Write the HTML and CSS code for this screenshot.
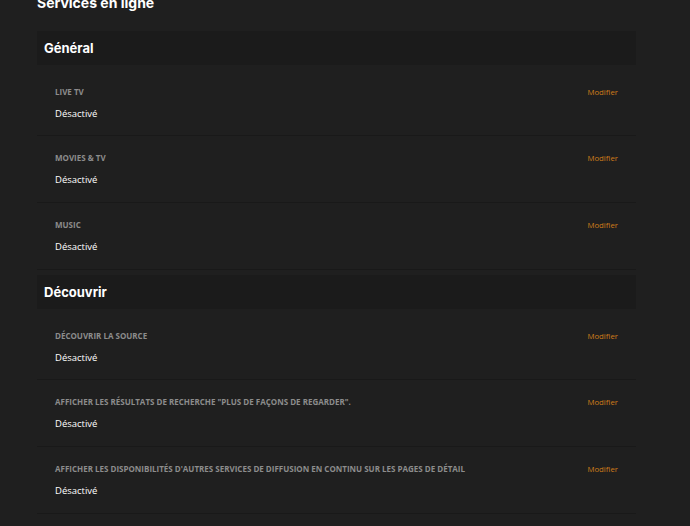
FILE: index.html
```html
<!DOCTYPE html>
<html lang="fr">
<head>
<meta charset="utf-8">
<link rel="stylesheet" href="styles.css">
</head>
<body>
<div class="page">
  <h1 class="title">Services en ligne</h1>
  <section class="group">
    <h2 class="group-head">Général</h2>
    <div class="row">
      <div class="row-main"><div class="label">Live TV</div><div class="value">Désactivé</div></div>
      <a class="edit">Modifier</a>
    </div>
    <div class="row">
      <div class="row-main"><div class="label">Movies &amp; TV</div><div class="value">Désactivé</div></div>
      <a class="edit">Modifier</a>
    </div>
    <div class="row">
      <div class="row-main"><div class="label">Music</div><div class="value">Désactivé</div></div>
      <a class="edit">Modifier</a>
    </div>
  </section>
  <section class="group">
    <h2 class="group-head">Découvrir</h2>
    <div class="row">
      <div class="row-main"><div class="label">Découvrir la source</div><div class="value">Désactivé</div></div>
      <a class="edit">Modifier</a>
    </div>
    <div class="row">
      <div class="row-main"><div class="label">Afficher les résultats de recherche "Plus de façons de regarder".</div><div class="value">Désactivé</div></div>
      <a class="edit">Modifier</a>
    </div>
    <div class="row">
      <div class="row-main"><div class="label">Afficher les disponibilités d'autres services de diffusion en continu sur les pages de détail</div><div class="value">Désactivé</div></div>
      <a class="edit">Modifier</a>
    </div>
  </section>
</div>
</body>
</html>
```
FILE: styles.css
```css
html, body {
  margin: 0;
  padding: 0;
  background: #1f1f1f;
  height: 100%;
  overflow: hidden;
}
body {
  font-family: "Open Sans", "Noto Sans", sans-serif;
  color: #fff;
}
.page {
  width: 599px;
  margin-left: 37px;
  margin-top: -9px;
}
.title {
  margin: 0;
  font-family: "Inter", "Noto Sans", sans-serif;
  font-weight: 700;
  font-size: 14px;
  line-height: 24px;
  color: #fff;
}
.group {
  margin-top: 16px;
}
.group + .group {
  margin-top: 5px;
}
.group-head {
  margin: 0;
  background: #1b1b1b;
  height: 34px;
  padding: 0 7px;
  display: flex;
  align-items: center;
  font-family: "Inter", "Noto Sans", sans-serif;
  font-weight: 700;
  font-size: 13px;
  color: #fff;
}
.row {
  display: flex;
  justify-content: space-between;
  align-items: flex-start;
  padding: 17px 18px;
  border-bottom: 1px solid #191919;
  height: 32px;
}
.group-head + .row {
  padding-top: 22px;
  height: 31px;
}
.row-main {
  display: flex;
  flex-direction: column;
  gap: 11px;
}
.label {
  font-size: 8px;
  line-height: 10px;
  font-weight: 700;
  text-transform: uppercase;
  color: #8c8c8c;
}
.value {
  font-size: 9.5px;
  line-height: 12px;
  color: #fff;
}
.edit {
  font-size: 7.8px;
  line-height: 10px;
  color: #cf7c1a;
  cursor: pointer;
}
```
